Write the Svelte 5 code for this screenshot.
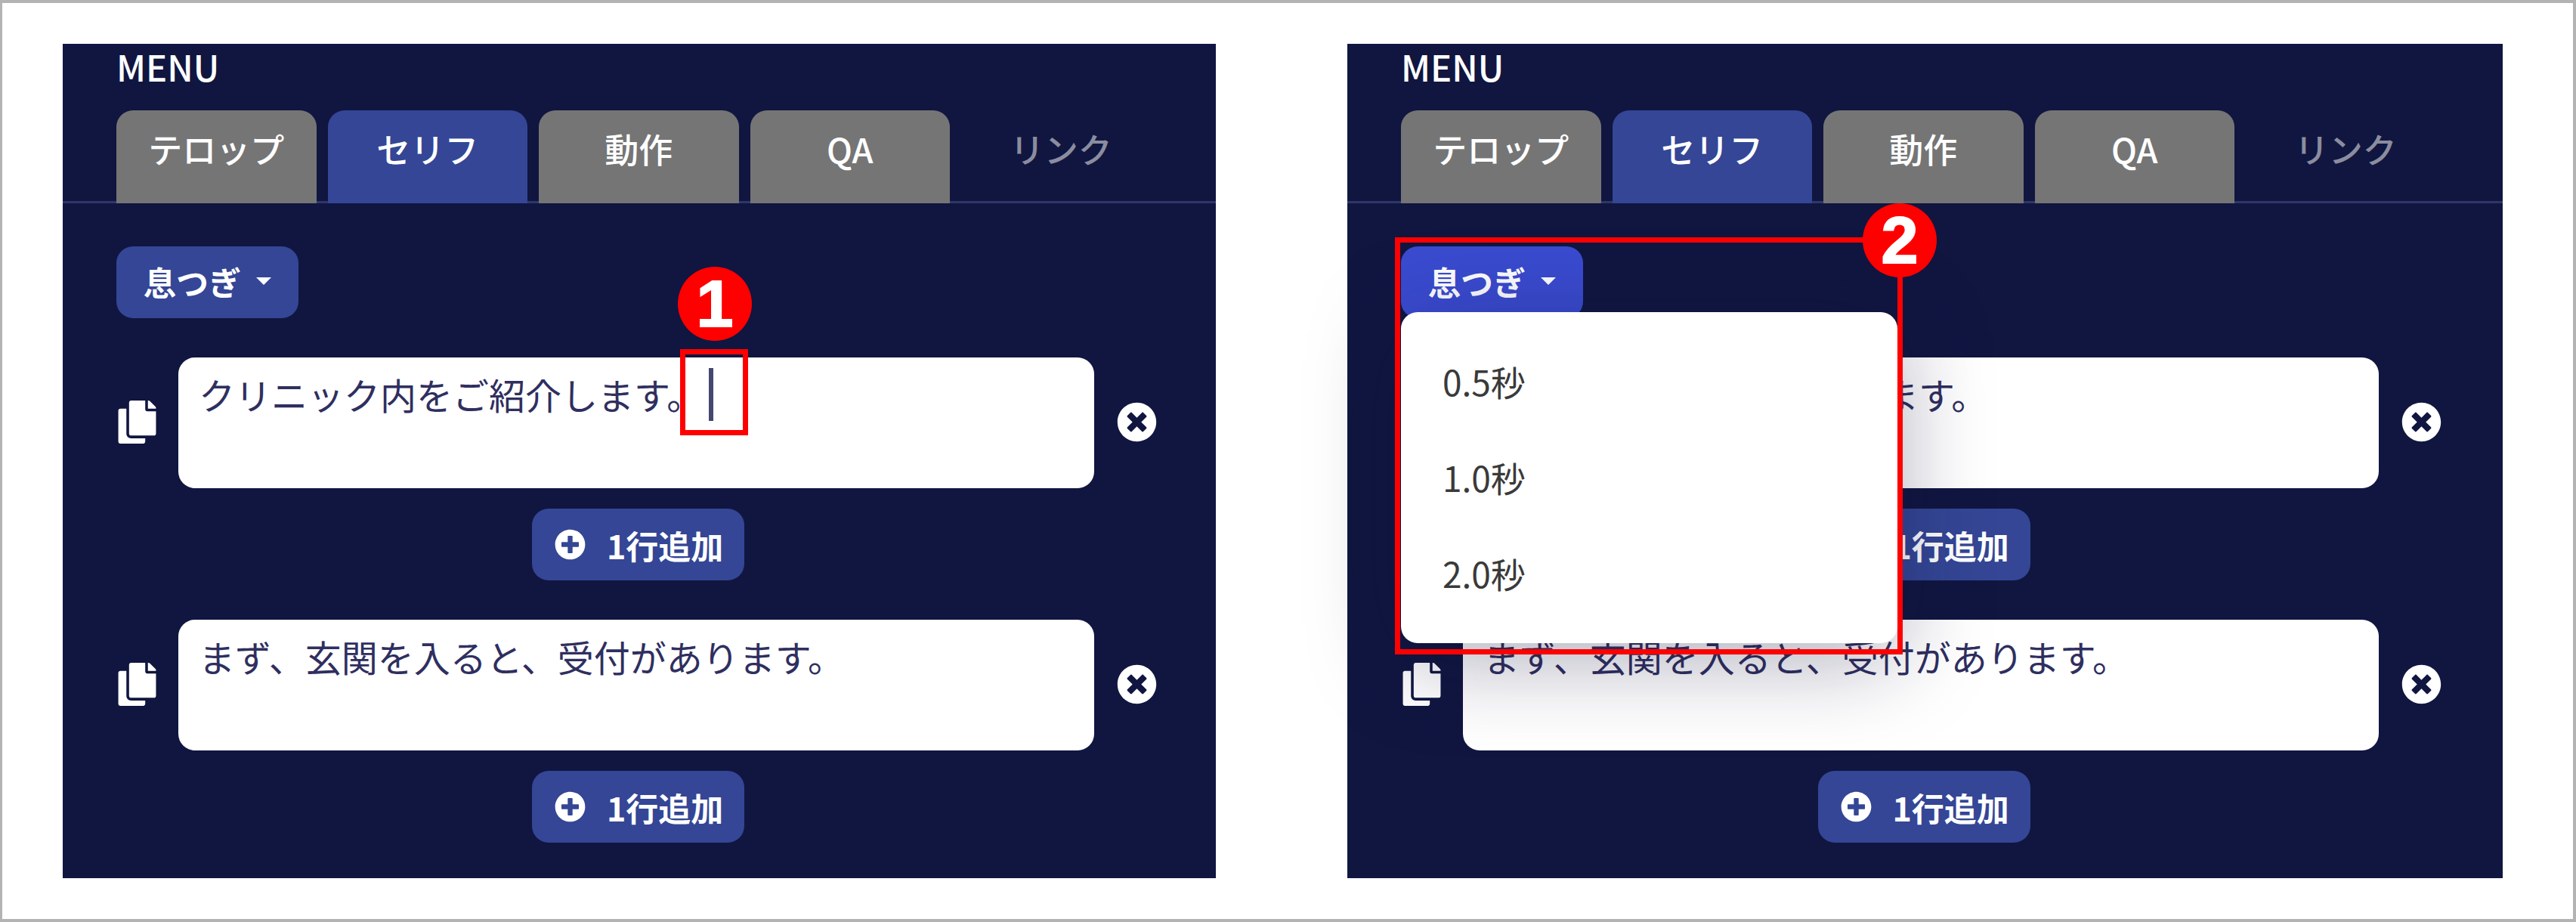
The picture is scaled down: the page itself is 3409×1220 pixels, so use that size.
<script lang="ts">
  const TABS = ['テロップ', 'セリフ', '動作', 'QA'];
  const LINES = ['クリニック内をご紹介します。', 'まず、玄関を入ると、受付があります。'];
  const TIMES = ['0.5秒', '1.0秒', '2.0秒'];

  // FontAwesome-ish solid glyphs
  const COPY = 'M320 448v40c0 13.255-10.745 24-24 24H24c-13.255 0-24-10.745-24-24V120c0-13.255 10.745-24 24-24h72v296c0 30.879 25.121 56 56 56h168zm0-344V0H152c-13.255 0-24 10.745-24 24v368c0 13.255 10.745 24 24 24h272c13.255 0 24-10.745 24-24V128H344c-13.2 0-24-10.8-24-24zm120.971-31.029L375.029 7.029A24 24 0 0 0 358.059 0H352v96h96v-6.059a24 24 0 0 0-7.029-16.97z';
  const CLOSE = 'M256 8C119 8 8 119 8 256s111 248 248 248 248-111 248-248S393 8 256 8zm121.6 313.1c4.7 4.7 4.7 12.3 0 17L338 377.6c-4.7 4.7-12.3 4.7-17 0L256 312l-65.1 65.6c-4.7 4.7-12.3 4.7-17 0L134.4 338c-4.7-4.7-4.7-12.3 0-17l65.6-65-65.6-65.1c-4.7-4.7-4.7-12.3 0-17l39.6-39.6c4.7-4.7 12.3-4.7 17 0l65 65.7 65.1-65.6c4.7-4.7 12.3-4.7 17 0l39.6 39.6c4.7 4.7 4.7 12.3 0 17L312 256l65.6 65.1z';
  const PLUS = 'M256 8C119 8 8 119 8 256s111 248 248 248 248-111 248-248S393 8 256 8zm144 276c0 6.6-5.4 12-12 12h-92v92c0 6.6-5.4 12-12 12h-56c-6.6 0-12-5.4-12-12v-92h-92c-6.6 0-12-5.4-12-12v-56c0-6.6 5.4-12 12-12h92v-92c0-6.6 5.4-12 12-12h56c6.6 0 12 5.4 12 12v92h92c6.6 0 12 5.4 12 12v56z';
</script>

{#snippet panel(open: boolean)}
  <section class="panel" class:open>
    <h2>MENU</h2>
    <nav class="tabs">
      {#each TABS as tab, i}
        <span class="tab" class:active={i === 1}>{tab}</span>
      {/each}
      <span class="tab link">リンク</span>
    </nav>

    <div class="body">
      <button class="breath">息つぎ<i class="caret"></i></button>

      {#each LINES as line, i}
        <div class="row">
          <svg class="copy" viewBox="0 0 448 512"><path d={COPY} /></svg>
          <div class="input">
            {line}
            {#if !open && i === 0}<i class="cursor"></i>{/if}
          </div>
          <svg class="close" viewBox="0 0 512 512"><path d={CLOSE} /></svg>
        </div>
        <button class="add">
          <svg viewBox="0 0 512 512"><path d={PLUS} /></svg>
          1行追加
        </button>
      {/each}
    </div>

    {#if open}
      <ul class="menu">
        {#each TIMES as t}
          <li>{t}</li>
        {/each}
      </ul>
      <div class="mark mark-menu"></div>
      <span class="badge badge-menu">2</span>
    {:else}
      <div class="mark mark-cursor"></div>
      <span class="badge badge-cursor">1</span>
    {/if}
  </section>
{/snippet}

<main class="frame">
  {@render panel(false)}
  {@render panel(true)}
</main>

<style>
  :global(body) {
    margin: 0;
    background: #fff;
  }

  .frame {
    box-sizing: border-box;
    width: 3409px;
    height: 1220px;
    border: 4px solid #b3b3b3;
    border-width: 4px 4px 4px 3px;
    padding: 54px 93px 0 80px;
    display: flex;
    justify-content: space-between;
    align-items: flex-start;
    font-family: "Noto Sans CJK JP", "Noto Sans", sans-serif;
  }

  .panel {
    position: relative;
    box-sizing: border-box;
    width: 1526px;
    height: 1104px;
    background: #101640;
    color: #fff;
  }
  .panel.open {
    width: 1529px;
  }

  h2 {
    margin: 0;
    padding-left: 71px;
    height: 88px;
    font-size: 47px;
    font-weight: 500;
    line-height: 60px;
  }

  .tabs {
    display: flex;
    gap: 15px;
    height: 120px;
    padding-left: 71px;
    border-bottom: 3px solid #2f3769;
  }

  .tab {
    flex: none;
    width: 264.5px;
    height: 123px;
    padding-top: 19px;
    box-sizing: border-box;
    border-radius: 22px 22px 0 0;
    background: #757575;
    text-align: center;
    font-size: 45px;
    font-weight: 500;
    line-height: 64px;
  }
  .tab.active {
    background: #344695;
  }
  .tab.link {
    background: none;
    color: #8b8d9f;
  }

  .body {
    display: flex;
    flex-direction: column;
    padding: 57px 74px 0 71px;
  }

  button {
    border: 0;
    padding: 0;
    display: flex;
    align-items: center;
    height: 95px;
    border-radius: 22px;
    background: #344695;
    color: #fff;
    font: inherit;
    font-size: 43px;
    font-weight: 700;
    white-space: nowrap;
  }

  .breath {
    align-self: flex-start;
    width: 241px;
    padding-left: 36px;
    box-sizing: border-box;
    padding-bottom: 4px;
  }
  .open .breath {
    background: #3a4bd0;
  }

  .caret {
    margin-left: 20px;
    border: 10px solid transparent;
    border-top-color: #fff;
    border-bottom: 0;
  }

  .row {
    display: grid;
    grid-template-columns: 53px 1212px 53px;
    gap: 29px;
    align-items: center;
    margin-top: 52px;
  }

  .copy {
    justify-self: end;
    width: 51px;
    height: 57px;
    margin-bottom: 3px;
    fill: #fff;
  }

  .close {
    width: 53px;
    height: 53px;
    margin: 0 0 3px 1px;
    fill: #fff;
  }

  .input {
    position: relative;
    box-sizing: border-box;
    height: 173px;
    padding: 14px 27px;
    border-radius: 22px;
    background: #fff;
    color: #2f2f5f;
    font-size: 48px;
    line-height: 68px;
  }

  .cursor {
    position: absolute;
    left: 702px;
    top: 14px;
    width: 6px;
    height: 70px;
    background: #45476f;
  }

  .add {
    align-self: center;
    width: 281px;
    margin-top: 27px;
    padding-left: 30px;
    box-sizing: border-box;
    gap: 28px;
  }
  .add svg {
    width: 41px;
    height: 41px;
    fill: #fff;
  }

  .menu {
    position: absolute;
    left: 71px;
    top: 355px;
    width: 657px;
    height: 438px;
    box-sizing: border-box;
    margin: 0;
    padding: 28px 0 0 55px;
    list-style: none;
    border-radius: 22px;
    background: #fff;
    color: #3a3a3a;
    font-size: 46px;
    line-height: 127px;
    box-shadow: 0 20px 120px rgba(20, 20, 60, 0.36);
  }

  .mark {
    position: absolute;
    box-sizing: border-box;
    border: 7px solid #f00;
  }
  .mark-cursor {
    left: 817px;
    top: 404px;
    width: 90px;
    height: 114px;
  }
  .mark-menu {
    left: 63px;
    top: 256px;
    width: 672px;
    height: 552px;
  }

  .badge {
    position: absolute;
    width: 98px;
    height: 98px;
    border-radius: 50%;
    background: #f00;
    color: #fff;
    font-family: "Liberation Sans", sans-serif;
    font-size: 88px;
    font-weight: 700;
    line-height: 98px;
    text-align: center;
    -webkit-text-stroke: 2px #fff;
  }
  .badge-cursor {
    left: 814px;
    top: 295px;
  }
  .badge-menu {
    left: 682px;
    top: 211px;
  }
</style>
